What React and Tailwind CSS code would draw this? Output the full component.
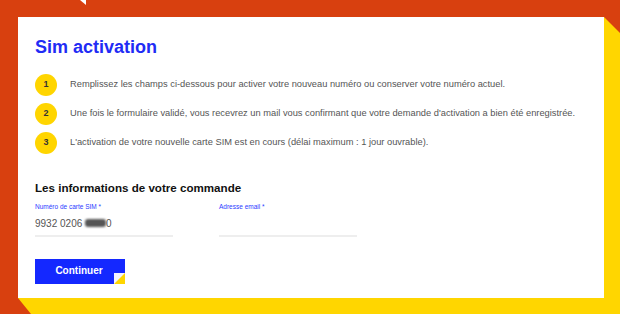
import React from "react";

const STEPS = [
  "Remplissez les champs ci-dessous pour activer votre nouveau numéro ou conserver votre numéro actuel.",
  "Une fois le formulaire validé, vous recevrez un mail vous confirmant que votre demande d'activation a bien été enregistrée.",
  "L'activation de votre nouvelle carte SIM est en cours (délai maximum : 1 jour ouvrable).",
];

function Step({ n, text }) {
  return (
    <div className="flex items-center h-[22px]">
      <div className="w-[22px] h-[22px] rounded-full bg-[#ffd500] flex items-center justify-center text-[9px] font-bold text-[#333]">
        {n}
      </div>
      <p className="ml-[13px] text-[9.3px] text-[#555]">{text}</p>
    </div>
  );
}

function Field({ label, children }) {
  return (
    <div className="w-[138px] flex flex-col">
      <label className="text-[6.5px] leading-[8px] text-[#2b3cff]">{label}</label>
      <div className="h-[18px] mt-[3px] flex items-center text-[10px] text-[#555]">
        {children}
      </div>
      <div className="h-[2px] mt-[3px] bg-[#eeeeee]" />
    </div>
  );
}

export default function App() {
  return (
    <div
      className="relative w-full h-[314px] bg-[#d8400f] pt-[17px] pl-[18px] pr-[16px] pb-[16px] overflow-hidden"
      style={{ fontFamily: '"Liberation Sans", Arial, sans-serif' }}
    >
      {/* yellow offset shadow */}
      <div className="absolute inset-0 bg-[#ffd600] [clip-path:polygon(604px_17px,620px_33px,620px_314px,31px_314px,18px_298px)]" />
      {/* small white mark top left */}
      <div className="absolute top-0 left-[80px] w-[6px] h-[5px] bg-white [clip-path:polygon(0_0,100%_0,100%_100%)]" />

      <div className="relative h-full bg-white pl-[17px] pt-[20px] flex flex-col">
        <h1 className="text-[18px] leading-[21px] font-bold text-[#1f2cf5]">Sim activation</h1>

        <div className="mt-[16px] flex flex-col gap-[7px]">
          {STEPS.map((t, i) => (
            <Step key={i} n={i + 1} text={t} />
          ))}
        </div>

        <h2 className="mt-[27px] text-[11.6px] leading-[14px] font-bold text-[#111]">
          Les informations de votre commande
        </h2>

        <div className="mt-[8px] flex gap-[46px]">
          <Field label="Numéro de carte SIM *">
            <span>9932 0206&nbsp;</span>
            <span className="inline-block w-[21px] h-[8px] rounded-[3px] bg-[#555] blur-[1px]" />
            <span>0</span>
          </Field>
          <Field label="Adresse email *" />
        </div>

        <button className="relative mt-[22px] w-[90px] h-[25px] bg-[#1428ff] text-white text-[10px] font-bold flex items-center justify-center">
          <span className="-ml-[2px] -mt-[2px]">Continuer</span>
          <span className="absolute right-0 bottom-0 w-[11px] h-[11px] bg-[#f4f4ff]">
            <span className="absolute inset-0 bg-[#ffd600] [clip-path:polygon(100%_0,100%_100%,0_100%)]" />
          </span>
        </button>
      </div>
    </div>
  );
}
